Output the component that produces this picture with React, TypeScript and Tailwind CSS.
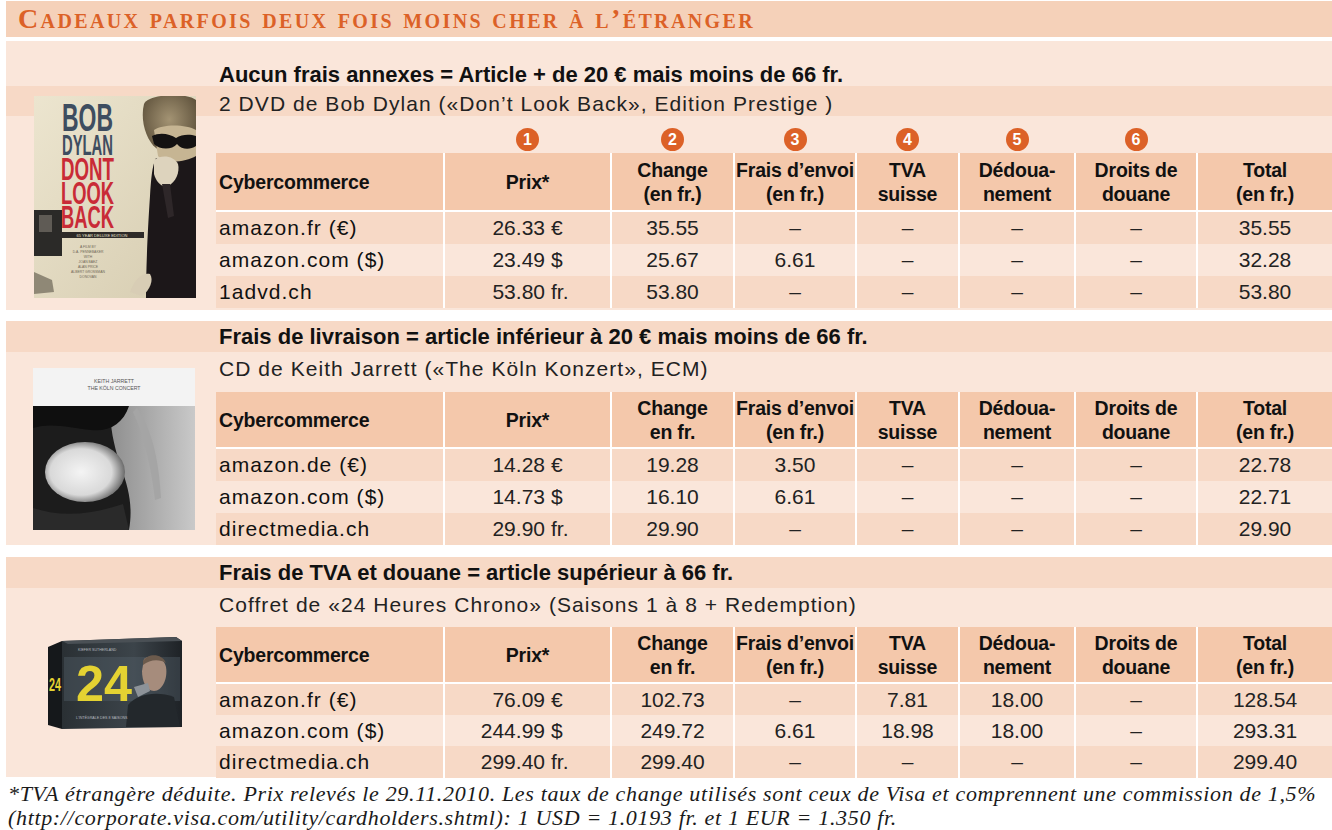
import React from "react";

type Row = { shop: string; amount: string; cur: string; vals: string[] };

const SANS = "font-['Liberation_Sans',Arial,sans-serif]";
const GRID =
  "grid grid-cols-[227px_165px_121px_120px_101px_114px_120px_134px] gap-x-[2px]";

const panels = [
  {
    title: "Aucun frais annexes = Article + de 20 € mais moins de 66 fr.",
    subtitle: "2 DVD de Bob Dylan («Don’t Look Back», Edition Prestige )",
    change: "(en fr.)",
    rows: [
      { shop: "amazon.fr (€)", amount: "26.33", cur: "€", vals: ["35.55", "–", "–", "–", "–", "35.55"] },
      { shop: "amazon.com ($)", amount: "23.49", cur: "$", vals: ["25.67", "6.61", "–", "–", "–", "32.28"] },
      { shop: "1advd.ch", amount: "53.80", cur: "fr.", vals: ["53.80", "–", "–", "–", "–", "53.80"] },
    ] as Row[],
  },
  {
    title: "Frais de livraison = article inférieur à 20 € mais moins de 66 fr.",
    subtitle: "CD de Keith Jarrett («The Köln Konzert», ECM)",
    change: "en fr.",
    rows: [
      { shop: "amazon.de (€)", amount: "14.28", cur: "€", vals: ["19.28", "3.50", "–", "–", "–", "22.78"] },
      { shop: "amazon.com ($)", amount: "14.73", cur: "$", vals: ["16.10", "6.61", "–", "–", "–", "22.71"] },
      { shop: "directmedia.ch", amount: "29.90", cur: "fr.", vals: ["29.90", "–", "–", "–", "–", "29.90"] },
    ] as Row[],
  },
  {
    title: "Frais de TVA et douane = article supérieur à 66 fr.",
    subtitle: "Coffret de «24 Heures Chrono» (Saisons 1 à 8 + Redemption)",
    change: "en fr.",
    rows: [
      { shop: "amazon.fr (€)", amount: "76.09", cur: "€", vals: ["102.73", "–", "7.81", "18.00", "–", "128.54"] },
      { shop: "amazon.com ($)", amount: "244.99", cur: "$", vals: ["249.72", "6.61", "18.98", "18.00", "–", "293.31"] },
      { shop: "directmedia.ch", amount: "299.40", cur: "fr.", vals: ["299.40", "–", "–", "–", "–", "299.40"] },
    ] as Row[],
  },
];

const DylanCover = () => (
  <svg width="162" height="202" viewBox="0 0 162 202">
    <defs>
      <linearGradient id="dyl-bg" x1="0" y1="0" x2="1" y2="1">
        <stop offset="0" stopColor="#ece5cf" />
        <stop offset="1" stopColor="#d6ccb0" />
      </linearGradient>
      <radialGradient id="dyl-hair" cx="0.5" cy="0.4" r="0.6">
        <stop offset="0" stopColor="#a39373" />
        <stop offset="1" stopColor="#5e513b" />
      </radialGradient>
    </defs>
    <rect width="162" height="202" fill="url(#dyl-bg)" />
    <path d="M110 8 C114 -2 152 -4 162 4 V58 C150 62 132 60 122 52 C112 44 106 24 110 8Z" fill="url(#dyl-hair)" />
    <path d="M120 34 C128 28 152 28 162 34 V64 C152 72 132 70 124 60Z" fill="#c6b593" />
    <path d="M118 40 C126 36 136 38 142 42 C148 38 156 38 162 40 V50 C156 54 148 54 143 48 C138 54 126 54 120 48Z" fill="#141212" />
    <path d="M122 62 C134 68 152 66 162 60 V202 H112 C112 170 114 130 116 100 C117 84 118 70 122 62Z" fill="#1c1719" />
    <path d="M120 64 C128 58 140 60 144 68 C146 76 142 86 134 90 C128 92 122 86 120 78Z" fill="#ddd3bd" />
    <path d="M128 88 L134 122 L140 120 L136 88Z" fill="#2e2729" />
    <path d="M96 196 C100 184 108 176 116 178 C120 184 116 194 108 200Z" fill="#d8cdb5" />
    <rect x="0" y="114" width="28" height="46" fill="#2b2a28" />
    <rect x="5" y="119" width="13" height="17" fill="#5f5b55" />
    <path d="M0 176 L18 184 L20 196 L0 198Z" fill="#8f8876" />
    <g fontFamily="Liberation Sans, sans-serif" fontWeight="700">
      <text x="28" y="35" fontSize="39" fill="#3e4d60" textLength="51" lengthAdjust="spacingAndGlyphs">BOB</text>
      <text x="28" y="59" fontSize="30" fill="#3e4d60" textLength="51" lengthAdjust="spacingAndGlyphs">DYLAN</text>
      <text x="27" y="84" fontSize="32" fill="#c92b37" textLength="53" lengthAdjust="spacingAndGlyphs">DONT</text>
      <text x="27" y="108" fontSize="32" fill="#c92b37" textLength="53" lengthAdjust="spacingAndGlyphs">LOOK</text>
      <text x="27" y="132" fontSize="32" fill="#c92b37" textLength="53" lengthAdjust="spacingAndGlyphs">BACK</text>
    </g>
    <rect x="26" y="136" width="84" height="6" fill="#2d2a28" />
    <text x="68" y="140.6" fontSize="4" fill="#e8e2d0" textAnchor="middle" fontFamily="Liberation Sans, sans-serif">65 YEAR DELUXE EDITION</text>
    <g fontSize="3.4" fill="#6f6756" textAnchor="middle" fontFamily="Liberation Sans, sans-serif">
      <text x="54" y="152">A FILM BY</text>
      <text x="54" y="157">D.A. PENNEBAKER</text>
      <text x="54" y="162">WITH</text>
      <text x="54" y="167">JOAN BAEZ</text>
      <text x="54" y="172">ALAN PRICE</text>
      <text x="54" y="177">ALBERT GROSSMAN</text>
      <text x="54" y="182">DONOVAN</text>
    </g>
  </svg>
);

const JarrettCover = () => (
  <svg width="162" height="162" viewBox="0 0 162 162">
    <defs>
      <linearGradient id="kj-right" x1="0" y1="0" x2="1" y2="0">
        <stop offset="0" stopColor="#8f8f8f" />
        <stop offset="1" stopColor="#c9c9c9" />
      </linearGradient>
      <radialGradient id="kj-shirt" cx="0.45" cy="0.5" r="0.55">
        <stop offset="0" stopColor="#f4f4f4" />
        <stop offset="0.7" stopColor="#d9d9d9" />
        <stop offset="1" stopColor="#6a6a6a" />
      </radialGradient>
    </defs>
    <rect width="162" height="162" fill="#f3f3f3" />
    <g fontFamily="Liberation Sans, sans-serif" fontSize="5.2" fill="#555" textAnchor="middle">
      <text x="81" y="15">KEITH JARRETT</text>
      <text x="81" y="22">THE KÖLN CONCERT</text>
    </g>
    <rect x="0" y="38" width="162" height="124" fill="#1c1c1c" />
    <path d="M78 38 H162 V162 H96 C100 140 96 120 88 100 C82 80 76 60 78 38Z" fill="url(#kj-right)" />
    <path d="M104 40 C118 60 126 90 128 130 L122 132 C118 96 110 66 100 44Z" fill="#a5a5a5" />
    <ellipse cx="52" cy="104" rx="40" ry="30" fill="url(#kj-shirt)" />
    <path d="M0 38 H96 C90 56 76 64 58 62 C38 60 18 54 0 60Z" fill="#0f0f0f" />
    <path d="M0 140 C30 150 60 146 90 136 L96 162 H0Z" fill="#2a2a2a" />
  </svg>
);

const ChronoBox = () => (
  <svg width="134" height="96" viewBox="0 0 134 96">
    <defs>
      <linearGradient id="b24" x1="0" y1="0" x2="1" y2="0">
        <stop offset="0" stopColor="#2a3034" />
        <stop offset="0.6" stopColor="#3c444a" />
        <stop offset="1" stopColor="#1e2226" />
      </linearGradient>
    </defs>
    <path d="M0 12 L14 6 L14 94 L0 90Z" fill="#15181b" />
    <path d="M14 6 L128 2 L134 6 L134 92 L14 94Z" fill="url(#b24)" />
    <path d="M14 6 L128 2 L134 6 L20 9Z" fill="#4a5055" />
    <rect x="16" y="22" width="116" height="44" fill="#56626b" opacity="0.4" />
    <path d="M96 24 C104 18 116 22 118 32 C120 44 114 56 106 56 C98 56 94 46 94 36Z" fill="#a68c7c" />
    <path d="M95 26 C100 18 114 18 118 28 C112 24 102 24 95 30Z" fill="#6b5a4c" />
    <path d="M80 70 C90 58 110 56 126 62 L132 92 H78Z" fill="#23282c" />
    <path d="M86 52 L100 48 L102 56 L90 62Z" fill="#8d9399" />
    <g fontFamily="Liberation Sans, sans-serif" fontWeight="700" fill="#e4d232">
      <text x="28" y="66" fontSize="50" textLength="56" lengthAdjust="spacingAndGlyphs">24</text>
      <text x="1" y="56" fontSize="18" textLength="12" lengthAdjust="spacingAndGlyphs">24</text>
    </g>
    <g fontFamily="Liberation Sans, sans-serif" fontSize="3.6" fill="#b8bcc0">
      <text x="30" y="16">KIEFER SUTHERLAND</text>
      <text x="28" y="84">L'INTÉGRALE DES 8 SAISONS</text>
    </g>
  </svg>
);

function Table({ rows, change, numbers, headH, rowH }: { rows: Row[]; change: string; numbers: boolean; headH: string; rowH: string }) {
  const heads = [
    ["Cybercommerce"],
    ["Prix*"],
    ["Change", change],
    ["Frais d’envoi", "(en fr.)"],
    ["TVA", "suisse"],
    ["Dédoua-", "nement"],
    ["Droits de", "douane"],
    ["Total", "(en fr.)"],
  ];
  return (
    <div>
      {numbers && (
        <div className={`${GRID} h-[37px] items-end pb-[2px]`}>
          <div />
          {[1, 2, 3, 4, 5, 6].map((n) => (
            <div key={n} className="flex justify-center">
              <span className={`flex h-[23px] w-[23px] items-center justify-center rounded-full bg-[#dc6127] text-[16px] font-bold text-white ${SANS}`}>
                {n}
              </span>
            </div>
          ))}
          <div />
        </div>
      )}
      <div className="bg-white">
        <div className={`${GRID} ${headH}`}>
          {heads.map((h, i) => (
            <div
              key={i}
              className={`flex flex-col justify-center overflow-hidden whitespace-nowrap bg-[#f4c8ab] text-[19.5px] leading-[24px] font-bold tracking-[-0.01em] text-[#111] ${SANS} ${i === 0 ? "items-start pl-[3px]" : "items-center"}`}
            >
              {h.map((l) => (
                <span key={l}>{l}</span>
              ))}
            </div>
          ))}
        </div>
        <div className="mt-[2px]">
          {rows.map((r, ri) => {
            const bg = ri % 2 === 0 ? "bg-[#f7d9c6]" : "bg-[#fae6da]";
            return (
              <div key={r.shop} className={`${GRID} ${rowH}`}>
                <div className={`${bg} flex items-center pl-[3px] text-[21px] tracking-[0.05em] text-[#111] ${SANS}`}>{r.shop}</div>
                <div className={`${bg} flex items-center text-[21px] text-[#222] ${SANS}`}>
                  <span className="w-[100px] text-right">{r.amount}</span>
                  <span className="ml-[6px]">{r.cur}</span>
                </div>
                {r.vals.map((v, vi) => (
                  <div key={vi} className={`${bg} flex items-center justify-center text-[21px] text-[#222] ${SANS}`}>
                    {v}
                  </div>
                ))}
              </div>
            );
          })}
        </div>
      </div>
    </div>
  );
}

export default function App() {
  const [p1, p2, p3] = panels;
  return (
    <div className="w-[1332px] h-[830px] overflow-hidden bg-white pl-[6px] pt-[1px]">
      <div className="h-[36px] bg-[#f5d1b9] pl-[12px]">
        <span className="font-['Liberation_Serif',serif] text-[28px] leading-[36px] font-bold tracking-[0.085em] text-[#dc6127] [font-variant:small-caps]">
          Cadeaux parfois deux fois moins cher à l’étranger
        </span>
      </div>

      {/* panel 1 */}
      <div className="mt-[4px] grid grid-cols-[210px_1116px] bg-[#fae6da] pb-[2px]">
        <div className={`col-start-2 row-start-1 h-[45px] pt-[21px] pl-[3px] text-[22px] leading-[26px] font-bold text-[#111] ${SANS}`}>
          {p1.title}
        </div>
        <div className={`col-start-1 col-span-2 row-start-2 flex h-[30px] items-end bg-[#f7d9c6] pl-[213px] text-[21px] leading-[25px] tracking-[0.05em] text-[#222] ${SANS}`}>
          {p1.subtitle}
        </div>
        <div className="relative z-10 col-start-1 row-start-2 row-span-2 self-center ml-[28px]">
          <DylanCover />
        </div>
        <div className="col-start-2 row-start-3">
          <Table rows={p1.rows} change={p1.change} numbers headH="h-[57px]" rowH="h-[32px]" />
        </div>
      </div>

      {/* panel 2 */}
      <div className="mt-[11px] grid grid-cols-[210px_1116px] bg-[#fae6da]">
        <div className={`col-start-1 col-span-2 row-start-1 h-[31px] bg-[#f7d9c6] pl-[213px] text-[22px] leading-[31px] font-bold text-[#111] ${SANS}`}>
          {p2.title}
        </div>
        <div className={`col-start-2 row-start-2 h-[34px] pl-[3px] text-[21px] leading-[34px] tracking-[0.05em] text-[#222] ${SANS}`}>
          {p2.subtitle}
        </div>
        <div className="col-start-1 row-start-2 row-span-2 self-center ml-[27px]">
          <JarrettCover />
        </div>
        <div className="col-start-2 row-start-3 pt-[6px]">
          <Table rows={p2.rows} change={p2.change} numbers={false} headH="h-[55px]" rowH="h-[32px]" />
        </div>
      </div>

      {/* panel 3 */}
      <div className="mt-[12px] grid grid-cols-[210px_1116px] bg-[#fae6da]">
        <div className={`col-start-1 col-span-2 row-start-1 h-[31px] bg-[#f7d9c6] pl-[213px] text-[22px] leading-[31px] font-bold text-[#111] ${SANS}`}>
          {p3.title}
        </div>
        <div className={`col-start-2 row-start-2 h-[34px] pl-[3px] text-[21px] leading-[34px] tracking-[0.05em] text-[#222] ${SANS}`}>
          {p3.subtitle}
        </div>
        <div className="col-start-1 row-start-2 row-span-2 self-center ml-[42px]">
          <ChronoBox />
        </div>
        <div className="col-start-2 row-start-3 pt-[5px]">
          <Table rows={p3.rows} change={p3.change} numbers={false} headH="h-[55px]" rowH="h-[31px]" />
        </div>
      </div>

      <p className="mt-[5px] pl-[2px] font-['Liberation_Serif',serif] text-[22px] leading-[24px] italic tracking-[0.03em] text-[#1a1a1a]">
        *TVA étrangère déduite. Prix relevés le 29.11.2010. Les taux de change utilisés sont ceux de Visa et comprennent une commission de 1,5%
        <br />
        (http://corporate.visa.com/utility/cardholders.shtml): 1 USD = 1.0193 fr. et 1 EUR = 1.350 fr.
      </p>
    </div>
  );
}
